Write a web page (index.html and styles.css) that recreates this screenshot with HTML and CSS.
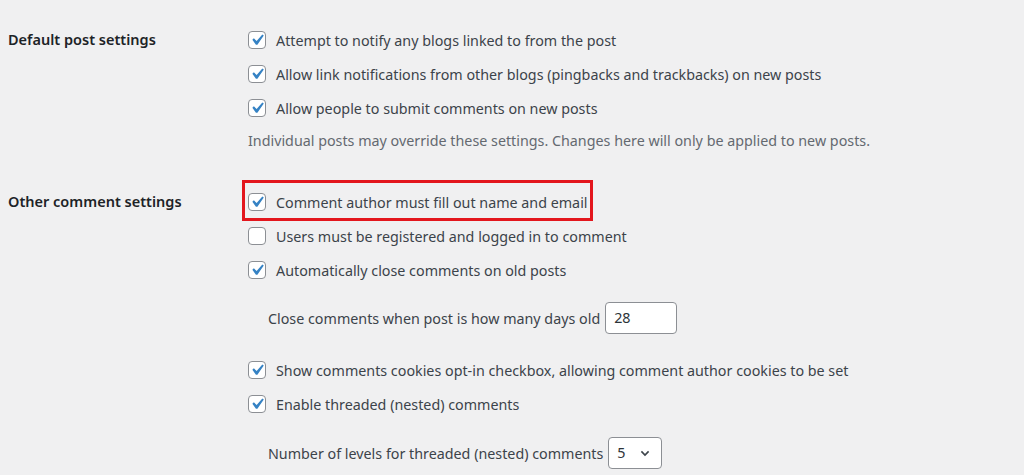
FILE: index.html
```html
<!DOCTYPE html>
<html lang="en">
<head>
    <meta charset="UTF-8">
    <title>Discussion Settings</title>
    <link rel="stylesheet" href="styles.css">
</head>
<body>

<div class="settings">
    <div class="setting-row first">
        <div class="setting-label">Default post settings</div>
        <div class="setting-fields">
            <label class="check"><span class="cb checked"><svg viewBox="0 0 20 20"><path d="M14.83 4.89l1.34.94-5.81 8.38H9.02L5.78 9.67l1.34-1.25 2.570 2.4z"/></svg></span>Attempt to notify any blogs linked to from the post</label>
            <label class="check"><span class="cb checked"><svg viewBox="0 0 20 20"><path d="M14.83 4.89l1.34.94-5.81 8.38H9.02L5.78 9.67l1.34-1.25 2.57 2.4z"/></svg></span>Allow link notifications from other blogs (pingbacks and trackbacks) on new posts</label>
            <label class="check"><span class="cb checked"><svg viewBox="0 0 20 20"><path d="M14.83 4.89l1.34.94-5.81 8.38H9.02L5.78 9.67l1.34-1.25 2.57 2.4z"/></svg></span>Allow people to submit comments on new posts</label>
            <p class="description">Individual posts may override these settings. Changes here will only be applied to new posts.</p>
        </div>
    </div>

    <div class="setting-row">
        <div class="setting-label">Other comment settings</div>
        <div class="setting-fields">
            <label class="check highlight"><span class="cb checked"><svg viewBox="0 0 20 20"><path d="M14.83 4.89l1.34.94-5.81 8.38H9.02L5.78 9.67l1.34-1.25 2.57 2.4z"/></svg></span>Comment author must fill out name and email</label>
            <label class="check"><span class="cb"></span>Users must be registered and logged in to comment</label>
            <label class="check"><span class="cb checked"><svg viewBox="0 0 20 20"><path d="M14.83 4.89l1.34.94-5.81 8.38H9.02L5.78 9.67l1.34-1.25 2.57 2.4z"/></svg></span>Automatically close comments on old posts</label>
            <div class="sub-field days">
                Close comments when post is how many days old
                <span class="num-input">28</span>
            </div>
            <label class="check"><span class="cb checked"><svg viewBox="0 0 20 20"><path d="M14.83 4.89l1.34.94-5.81 8.38H9.02L5.78 9.67l1.34-1.25 2.57 2.4z"/></svg></span>Show comments cookies opt-in checkbox, allowing comment author cookies to be set</label>
            <label class="check"><span class="cb checked"><svg viewBox="0 0 20 20"><path d="M14.83 4.89l1.34.94-5.81 8.38H9.02L5.78 9.67l1.34-1.25 2.57 2.4z"/></svg></span>Enable threaded (nested) comments</label>
            <div class="sub-field levels">
                Number of levels for threaded (nested) comments
                <span class="select">5<svg viewBox="0 0 20 20"><path d="M5.5 8l4.5 4.5 4.5-4.5" fill="none" stroke="#3c434a" stroke-width="2"/></svg></span>
            </div>
        </div>
    </div>
</div>

</body>
</html>
```

FILE: styles.css
```css
body {
    margin: 0;
    background: #f0f0f1;
    font-family: "Noto Sans", "Open Sans", sans-serif;
    font-size: 14.3px;
    color: #3c434a;
    overflow: hidden;
}

.settings {
    padding: 0 8px;
}

.setting-row {
    display: flex;
    margin-top: 32px;
}

.setting-row.first {
    margin-top: 23px;
}

.setting-label {
    width: 240px;
    flex-shrink: 0;
    font-weight: 600;
    font-size: 14.5px;
    color: #1d2327;
    line-height: 32px;
}

.setting-fields {
    display: flex;
    flex-direction: column;
}

.check {
    display: flex;
    align-items: center;
    height: 34px;
    white-space: nowrap;
    position: relative;
}

.cb {
    flex-shrink: 0;
    width: 16px;
    height: 16px;
    border: 1px solid #8c8f94;
    border-radius: 4px;
    background: #fff;
    margin-right: 10px;
    position: relative;
}

.cb svg {
    position: absolute;
    left: -3px;
    top: -3px;
    width: 22px;
    height: 22px;
    fill: #3582c4;
}

.highlight::after {
    content: "";
    position: absolute;
    left: -6px;
    top: -5px;
    width: 345px;
    height: 35px;
    border: 3px solid #e3161d;
}

.description {
    margin: 4px 0 0;
    line-height: 24px;
    color: #646970;
}

.sub-field {
    display: flex;
    align-items: center;
    padding-left: 20px;
    white-space: nowrap;
}

.sub-field.days {
    margin: 15px 0 19px;
}

.sub-field.levels {
    margin-top: 16px;
}

.num-input {
    margin-left: 5px;
    width: 54px;
    height: 30px;
    padding: 0 8px;
    line-height: 30px;
    background: #fff;
    border: 1px solid #8c8f94;
    border-radius: 4px;
    color: #2c3338;
}

.select {
    margin-left: 5px;
    width: 36px;
    height: 30px;
    padding: 0 8px;
    line-height: 30px;
    background: #fff;
    border: 1px solid #8c8f94;
    border-radius: 4px;
    color: #2c3338;
    display: flex;
    align-items: center;
    justify-content: space-between;
}

.select svg {
    width: 16px;
    height: 16px;
}
```
